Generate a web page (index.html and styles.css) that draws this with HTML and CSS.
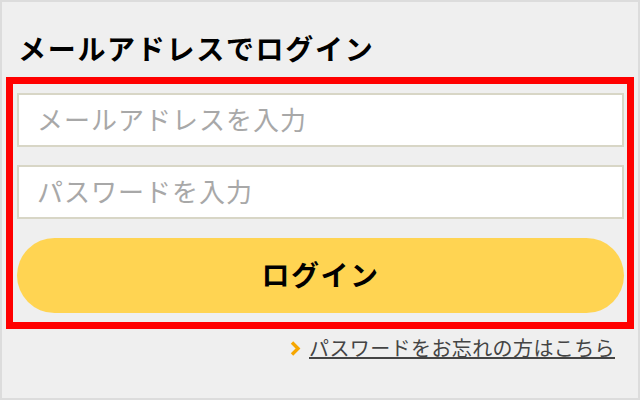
FILE: index.html
```html
<!DOCTYPE html>
<html lang="ja">
<head>
<meta charset="utf-8">
<title>メールアドレスでログイン</title>
<link rel="stylesheet" href="styles.css">
</head>
<body>
<div class="page">
  <h1 class="title">メールアドレスでログイン</h1>
  <form class="login-box">
    <input class="field" type="email" placeholder="メールアドレスを入力">
    <input class="field" type="password" placeholder="パスワードを入力">
    <button class="login-btn" type="button">ログイン</button>
  </form>
  <div class="forgot">
    <svg class="chev" width="11" height="15" viewBox="0 0 11 15"><path d="M2 1.5 L8 7.5 L2 13.5" fill="none" stroke="#f6a600" stroke-width="3.4"/></svg>
    <a class="forgot-link" href="#">パスワードをお忘れの方はこちら</a>
  </div>
</div>
</body>
</html>
```
FILE: styles.css
```css
html, body {
  margin: 0;
  padding: 0;
}
body {
  font-family: "Noto Sans CJK JP", "Noto Sans", sans-serif;
}
.page {
  box-sizing: border-box;
  width: 640px;
  height: 400px;
  border: 2px solid #dcdcdc;
  background: #efefef;
  padding: 0 4px;
}
.title {
  margin: 0;
  padding: 26px 12px 9px;
  font-size: 28px;
  line-height: 40px;
  font-weight: 700;
  letter-spacing: 1.7px;
  color: #000;
}
.login-box {
  margin: 0;
  border: 7px solid #ff0000;
  padding: 9px 3px 9px 4px;
  display: flex;
  flex-direction: column;
}
.field {
  box-sizing: border-box;
  height: 54px;
  margin: 0 0 18px;
  border: 2px solid #d8d6c6;
  background: #fff;
  padding: 0 18px 4px;
  font-family: "Noto Sans CJK JP", "Noto Sans", sans-serif;
  font-size: 26px;
  letter-spacing: 1px;
  color: #333;
  outline: none;
}
.field::placeholder {
  color: #a8a8a8;
}
.login-btn {
  margin-top: 1px;
  height: 75px;
  border: none;
  border-radius: 38px;
  background: #ffd452;
  font-family: "Noto Sans CJK JP", "Noto Sans", sans-serif;
  font-size: 28px;
  font-weight: 700;
  letter-spacing: 1.5px;
  color: #000;
  padding: 0 0 4px;
}
.forgot {
  display: flex;
  justify-content: flex-end;
  align-items: center;
  gap: 8px;
  margin-top: 5px;
  padding-right: 19px;
  height: 28px;
}
.chev {
  display: block;
}
.forgot-link {
  font-size: 20px;
  line-height: 28px;
  color: #444;
  text-decoration: underline;
  text-decoration-color: #444;
  letter-spacing: 0.4px;
}
```
